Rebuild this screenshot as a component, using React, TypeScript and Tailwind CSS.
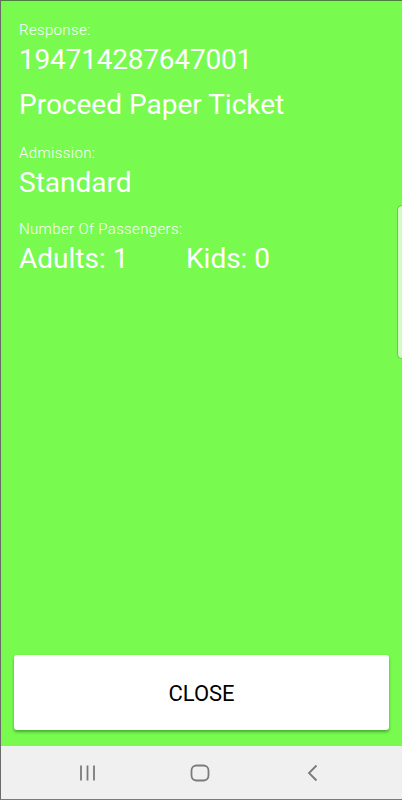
export default function App() {
  const font = { fontFamily: "Roboto, 'Noto Sans', sans-serif" };

  return (
    <div
      className="relative flex h-[800px] w-[402px] flex-col overflow-hidden border-t border-l border-b border-t-[#4c7f3e] border-l-[#6b6b6b] border-b-[#7a7a7a] bg-[#78fa4f]"
      style={font}
    >
      {/* Content */}
      <div className="flex flex-1 flex-col px-[18px] pt-[20px] text-white">
        <p className="text-[15px] font-light leading-[18px] tracking-[0.35px]">Response:</p>
        <p className="mt-[5px] text-[28px] leading-[32px] tracking-[-0.2px]">194714287647001</p>
        <p className="mt-[13px] text-[28px] leading-[32px]">Proceed Paper Ticket</p>

        <p className="mt-[23px] text-[15px] font-light leading-[18px] tracking-[0.35px]">Admission:</p>
        <p className="mt-[5px] text-[28px] leading-[32px]">Standard</p>

        <p className="mt-[21px] text-[15px] font-light leading-[18px] tracking-[0.35px]">Number Of Passengers:</p>
        <div className="mt-[5px] flex text-[28px] leading-[32px]">
          <span className="w-[167px]">Adults: 1</span>
          <span>Kids: 0</span>
        </div>

        <div className="mt-auto mb-[16px] -mx-[5px]">
          <button className="flex h-[75px] w-[375px] items-center justify-center rounded-[3px] bg-white pt-[2px] text-[22px] text-black shadow-[0_2px_3px_rgba(0,80,0,0.45)]">
            CLOSE
          </button>
        </div>
      </div>

      {/* Edge handle */}
      <div className="absolute right-0 top-[204px] h-[154px] w-[5px] rounded-l-[5px] border border-r-0 border-[#5fcf40] bg-[#d4fbc6]" />

      {/* Navigation bar */}
      <div className="flex h-[53px] items-center bg-[#f0f0f0]">
        <svg width="16" height="18" viewBox="0 0 16 18" className="ml-[78px]">
          <g stroke="#7a7a7a" strokeWidth="1.8">
            <line x1="2" y1="1.5" x2="2" y2="16.5" />
            <line x1="8.5" y1="1.5" x2="8.5" y2="16.5" />
            <line x1="15" y1="1.5" x2="15" y2="16.5" />
          </g>
        </svg>
        <svg width="20" height="18" viewBox="0 0 20 18" className="ml-[95px]">
          <rect x="1.5" y="1.5" width="17" height="15" rx="5" fill="none" stroke="#7a7a7a" strokeWidth="1.8" />
        </svg>
        <svg width="13" height="18" viewBox="0 0 13 18" className="ml-[96px]">
          <polyline points="10.5,1.5 3,9 10.5,16.5" fill="none" stroke="#7a7a7a" strokeWidth="1.8" />
        </svg>
      </div>
    </div>
  );
}
